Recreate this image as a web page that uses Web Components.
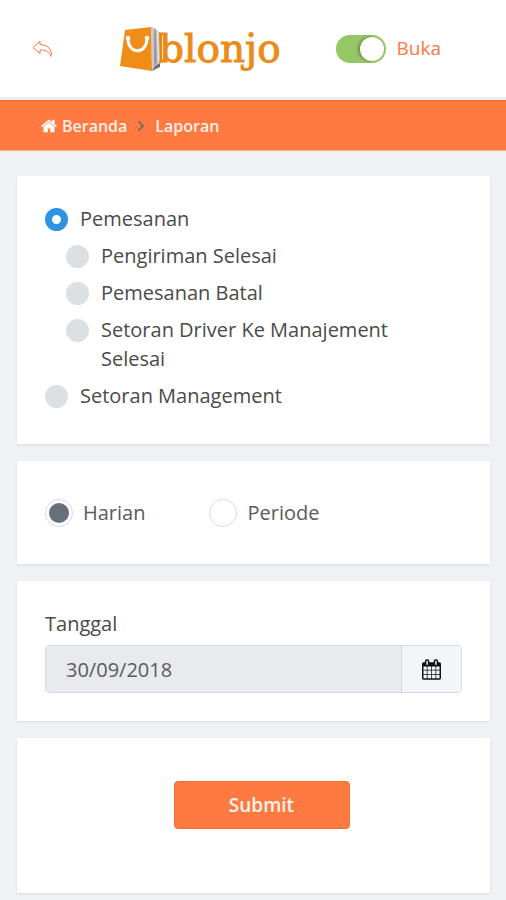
<!DOCTYPE html>
<html lang="id">
<head>
<meta charset="utf-8">
<meta name="viewport" content="width=device-width, initial-scale=1">
<title>Blonjo - Laporan</title>
<style>
  body {
    margin: 0;
    min-height: 100vh;
    background: #eff1f5;
    color: #4a4a4a;
    font: 20px/29px "Open Sans", "Noto Sans", sans-serif;
  }
</style>
</head>
<body>
<report-page></report-page>
<script>
const define = (name, html) => customElements.define(name, class extends HTMLElement {
  constructor() {
    super();
    const template = document.createElement('template');
    template.innerHTML = html;
    this.attachShadow({ mode: 'open' }).append(template.content.cloneNode(true));
  }
});

define('brand-logo', `
<style>
  :host { display: block; }
  a { display: flex; align-items: center; color: #ec8b16; text-decoration: none; }
  svg { flex: none; }
  span { font: 39px/56px "DejaVu Serif", serif; margin-left: -4px; -webkit-text-stroke: 1px #ec8b16; }
</style>
<a href="#">
  <svg width="43" height="46" viewBox="0 0 43 46" aria-hidden="true">
    <path d="M37 6l5 1v29l-4 3z" fill="#e5861a"/>
    <path d="M31 1l4 1 4 4 1 34-8 5z" fill="#c9c9ce"/>
    <path d="M34 3l2 1 1 33-3 3z" fill="#9b9ba1"/>
    <path d="M37 6l1 1 1 28-1 1z" fill="#ececf0"/>
    <path d="M32 45l8-4v-4l-5 3z" fill="#6d6d72"/>
    <path d="M5 4L31 1l1 44L0 40z" fill="#f08c18"/>
    <path d="M8 14c1 14 18 15 19-1" fill="none" stroke="#fff" stroke-width="3" stroke-linecap="round"/>
    <circle cx="8" cy="12" r="2.300" fill="#fff"/><circle cx="27" cy="12" r="2.300" fill="#fff"/>
  </svg>
  <span>blonjo</span>
</a>`);

define('store-switch', `
<style>
  :host { display: block; }
  label { display: flex; align-items: center; gap: 11px; color: #ff7840; font-size: 19px; }
  input {
    appearance: none; box-sizing: border-box; display: flex; justify-content: flex-start;
    width: 50px; height: 28px; margin: 0; padding: 2px; border-radius: 14px; background: #c9ced3;
  }
  input::before {
    content: ""; width: 24px; height: 24px; border-radius: 50%; background: #fff;
    box-shadow: -2px 0 3px rgba(0,0,0,.3);
  }
  input:checked { justify-content: flex-end; background: #96c766; }
</style>
<label><input type="checkbox" role="switch" checked><slot></slot></label>`);

define('app-header', `
<style>
  :host { display: block; background: #fff; border-bottom: 3px solid #ebedf2; }
  header {
    display: grid; grid-template-columns: 88px 1fr auto; align-items: center;
    box-sizing: border-box; min-height: 97px; padding: 0 65px 0 32px;
  }
  button { display: flex; justify-self: start; padding: 0; border: 0; background: none; color: #ff7840; }
</style>
<header>
  <button type="button" aria-label="Kembali">
    <svg width="21" height="18" viewBox="0 0 21 18" fill="none" stroke="currentColor" stroke-linejoin="round" aria-hidden="true">
      <path d="M8 1L1 7.500l7 6V10c5-.5 8.500 1 11 6.500 1.500-7-3-11.500-11-12z"/>
    </svg>
  </button>
  <brand-logo></brand-logo>
  <store-switch>Buka</store-switch>
</header>`);

define('bread-crumb', `
<style>
  :host { display: block; background: #ff7a40; border-top: 2px solid #f47323; border-bottom: 1px solid #ffac8b; }
  nav { display: flex; align-items: center; min-height: 48px; padding: 0 41px; font-size: 16px; font-weight: 600; color: #ffeee6; }
  a { display: flex; align-items: center; gap: 5px; color: inherit; text-decoration: none; }
  .sep { margin: 0 10px; }
</style>
<nav aria-label="Breadcrumb">
  <a href="#">
    <svg width="16" height="16" viewBox="64 128 1664 1536" fill="#fff" aria-hidden="true"><path d="M1472 992v480q0 26-19 45t-45 19h-384v-384h-256v384h-384q-26 0-45-19t-19-45v-480q0-1 .5-3t.5-3l575-474 575 474q1 2 1 6zm223-69l-62 74q-8 9-21 11h-3q-13 0-21-7l-692-577-692 577q-12 8-24 7-13-2-21-11l-62-74q-8-10-7-23.500t11-21.500l719-599q32-26 76-26t76 26l244 204v-195q0-14 9-23t23-9h192q14 0 23 9t9 23v408l219 182q10 8 11 21.500t-7 23.500z"/></svg>
    <span>Beranda</span>
  </a>
  <svg class="sep" width="8" height="12" viewBox="0 0 8 12" fill="none" stroke="#87675f" stroke-width="2" aria-hidden="true"><path d="M1.500 1.500L6 6l-4.500 4.500"/></svg>
  <span aria-current="page">Laporan</span>
</nav>`);

define('panel-card', `
<style>
  :host { display: block; box-sizing: border-box; padding: 28px; background: #fff; box-shadow: 0 1px 2px rgba(60,70,90,.12); }
</style>
<slot></slot>`);

define('report-options', `
<style>
  :host { display: block; padding-bottom: 6px; }
  fieldset { display: grid; gap: 8px; margin: 0; padding: 0; border: 0; }
  .nested { display: grid; gap: 8px; padding-left: 21px; }
  label { display: flex; align-items: flex-start; gap: 12px; }
  .nested label { max-width: 340px; }
  input { appearance: none; box-sizing: border-box; flex: none; width: 23px; height: 23px; margin: 4px 0 0; border-radius: 50%; background: #dde0e3; }
  input:checked { border: 7px solid #2f93e3; background: #fff; }
</style>
<fieldset aria-label="Jenis laporan">
  <label><input type="radio" name="report" checked>Pemesanan</label>
  <div class="nested">
    <label><input type="radio" name="report">Pengiriman Selesai</label>
    <label><input type="radio" name="report">Pemesanan Batal</label>
    <label><input type="radio" name="report">Setoran Driver Ke Manajement Selesai</label>
  </div>
  <label><input type="radio" name="report">Setoran Management</label>
</fieldset>`);

define('period-options', `
<style>
  :host { display: block; padding: 9px 0; color: #5a5a5a; }
  fieldset { display: flex; flex-wrap: wrap; gap: 9px 64px; margin: 0; padding: 0; border: 0; }
  label { display: flex; align-items: center; gap: 10px; }
  input { appearance: none; box-sizing: border-box; display: grid; place-items: center; width: 28px; height: 28px; margin: 0; border: 1px solid #d8dbde; border-radius: 50%; background: #fff; }
  input:checked::before { content: ""; width: 20px; height: 20px; border-radius: 50%; background: #66707a; }
</style>
<fieldset aria-label="Rentang waktu">
  <label><input type="radio" name="period" checked>Harian</label>
  <label><input type="radio" name="period">Periode</label>
</fieldset>`);

define('date-field', `
<style>
  :host { display: grid; gap: 7px; }
  .group { display: flex; box-sizing: border-box; height: 48px; border: 1px solid #d3d9e0; border-radius: 4px; overflow: hidden; }
  input { flex: 1; min-width: 0; margin: 0; padding: 0 20px; border: 0; background: #e8eaed; color: #575c61; font: inherit; }
  button { display: grid; place-items: center; width: 60px; padding: 0; border: 0; border-left: 1px solid #d3d9e0; background: #f3f5f8; color: #111; }
</style>
<label for="date">Tanggal</label>
<div class="group">
  <input id="date" type="text" value="30/09/2018" readonly>
  <button type="button" aria-label="Pilih tanggal">
    <svg width="19" height="21" viewBox="64 0 1664 1792" fill="currentColor" aria-hidden="true"><path d="M192 1664h288v-288h-288v288zm352 0h320v-288h-320v288zm-352-352h288v-320h-288v320zm352 0h320v-320h-320v320zm-352-384h288v-288h-288v288zm736 736h320v-288h-320v288zm-384-736h320v-288h-320v288zm768 736h288v-288h-288v288zm-384-352h320v-320h-320v320zm-352-864v-288q0-13-9.500-22.500t-22.500-9.500h-64q-13 0-22.500 9.500t-9.500 22.500v288q0 13 9.500 22.500t22.500 9.500h64q13 0 22.500-9.500t9.500-22.500zm736 864h288v-320h-288v320zm-384-384h320v-288h-320v288zm384 0h288v-288h-288v288zm32-480v-288q0-13-9.500-22.500t-22.500-9.500h-64q-13 0-22.500 9.500t-9.500 22.500v288q0 13 9.500 22.500t22.500 9.500h64q13 0 22.500-9.500t9.500-22.500zm384-64v1280q0 52-38 90t-90 38h-1408q-52 0-90-38t-38-90v-1280q0-52 38-90t90-38h128v-96q0-66 47-113t113-47h64q66 0 113 47t47 113v96h384v-96q0-66 47-113t113-47h64q66 0 113 47t47 113v96h128q52 0 90 38t38 90z"/></svg>
  </button>
</div>`);

define('submit-action', `
<style>
  :host { display: flex; justify-content: center; padding: 15px 0 36px 16px; }
  button { min-width: 176px; height: 48px; padding: 0 24px; border: 1px solid #f76d2e; border-radius: 4px; background: #ff7a40; color: #fff3ed; font: inherit; font-size: 19px; font-weight: 600; }
</style>
<button type="submit"><slot></slot></button>`);

define('report-page', `
<style>
  :host { display: block; }
  main { display: grid; gap: 17px; padding: 25px 16px 7px 17px; }
</style>
<app-header></app-header>
<bread-crumb></bread-crumb>
<main>
  <panel-card><report-options></report-options></panel-card>
  <panel-card><period-options></period-options></panel-card>
  <panel-card><date-field></date-field></panel-card>
  <panel-card><submit-action>Submit</submit-action></panel-card>
</main>`);
</script>
</body>
</html>
